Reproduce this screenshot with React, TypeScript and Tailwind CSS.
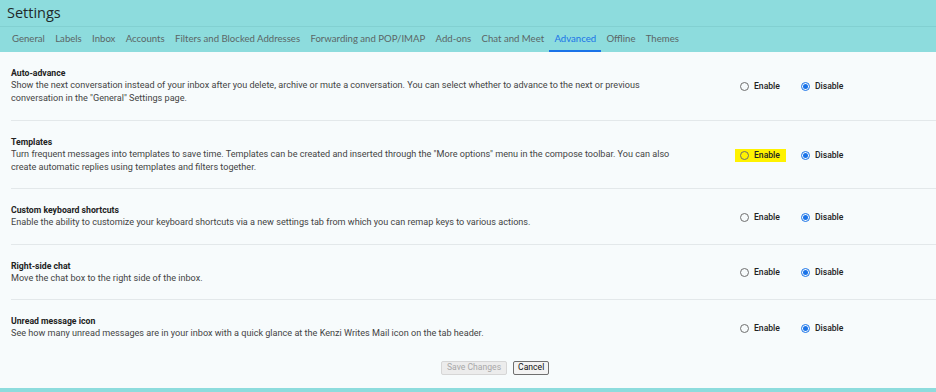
const tabs = [
  'General',
  'Labels',
  'Inbox',
  'Accounts',
  'Filters and Blocked Addresses',
  'Forwarding and POP/IMAP',
  'Add-ons',
  'Chat and Meet',
  'Advanced',
  'Offline',
  'Themes',
];

type Setting = {
  title: string;
  lines: string[];
  highlight?: boolean;
  pb: string;
};

const settings: Setting[] = [
  {
    title: 'Auto-advance',
    lines: [
      'Show the next conversation instead of your inbox after you delete, archive or mute a conversation. You can select whether to advance to the next or previous',
      'conversation in the "General" Settings page.',
    ],
    pb: 'pb-[16px]',
  },
  {
    title: 'Templates',
    lines: [
      'Turn frequent messages into templates to save time. Templates can be created and inserted through the "More options" menu in the compose toolbar. You can also',
      'create automatic replies using templates and filters together.',
    ],
    highlight: true,
    pb: 'pb-[15px]',
  },
  {
    title: 'Custom keyboard shortcuts',
    lines: ['Enable the ability to customize your keyboard shortcuts via a new settings tab from which you can remap keys to various actions.'],
    pb: 'pb-[15px]',
  },
  {
    title: 'Right-side chat',
    lines: ['Move the chat box to the right side of the inbox.'],
    pb: 'pb-[15px]',
  },
  {
    title: 'Unread message icon',
    lines: ['See how many unread messages are in your inbox with a quick glance at the Kenzi Writes Mail icon on the tab header.'],
    pb: 'pb-[21px]',
  },
];

const Radio = ({ checked }: { checked?: boolean }) =>
  checked ? (
    <span className="w-[9px] h-[9px] rounded-full border border-[#1a73e8] flex items-center justify-center">
      <span className="w-[5px] h-[5px] rounded-full bg-[#1a73e8]" />
    </span>
  ) : (
    <span className="w-[9px] h-[9px] rounded-full border border-[#6f6f6f]" />
  );

const SettingRow = ({ s, last }: { s: Setting; last?: boolean }) => (
  <div className={`flex items-center pt-[15px] ${s.pb} ${last ? '' : 'border-b border-[#e3e8ea]'}`}>
    <div className="w-[729px] pr-[30px]">
      <div className="font-bold text-[#222] leading-[12px] text-[8.7px]">{s.title}</div>
      {s.lines.map((l) => (
        <div key={l} className="text-[#444] leading-[12.5px] whitespace-nowrap">
          {l}
        </div>
      ))}
    </div>
    <div className="flex items-center font-medium text-[#222] text-[8.6px] translate-y-[1px]">
      <div className={`flex items-center gap-[5px] h-[13px] ${s.highlight ? 'bg-[#fff200] -ml-[5px] pl-[5px] pr-[6px]' : 'pr-[6px]'}`}>
        <Radio />
        <span>Enable</span>
      </div>
      <div className="flex items-center gap-[5px] ml-[15px]">
        <Radio checked />
        <span>Disable</span>
      </div>
    </div>
  </div>
);

export default function App() {
  return (
    <div className="w-[936px] h-[392px] bg-[#f7fbfc] flex flex-col overflow-hidden font-['Roboto',sans-serif] text-[9.1px]">
      {/* header */}
      <div className="bg-[#8ddcdd]">
        <div className="h-[27px] pl-[7px] flex items-center text-[14.5px] text-[#1f2a2a] font-['Open_Sans',sans-serif] border-b border-[#82d0d1]">
          Settings
        </div>
        <div className="flex pl-[12px] gap-[10.3px] h-[25px] font-['Lato',sans-serif] text-[9.6px]">
          {tabs.map((t) =>
            t === 'Advanced' ? (
              <div key={t} className="flex items-center text-[#1a73e8] border-b-[2px] border-[#1a73e8] px-[5px] -mx-[5px] pt-[2px]">
                {t}
              </div>
            ) : (
              <div key={t} className="flex items-center text-[#5b6666]">
                {t}
              </div>
            ),
          )}
        </div>
      </div>

      {/* settings list */}
      <div className="pl-[11px] flex flex-col">
        {settings.map((s, i) => (
          <SettingRow key={s.title} s={s} last={i === settings.length - 1} />
        ))}
      </div>

      {/* actions */}
      <div className="flex gap-[6px] pl-[441px] text-[8.6px]">
        <button className="h-[14px] px-[5px] border border-[#d6d6d6] bg-[#ececec] text-[#a8a8a8] rounded-[2px] leading-none">
          Save Changes
        </button>
        <button className="h-[14px] px-[4px] border border-[#6f6f6f] bg-[#f3f3f3] text-[#111] rounded-[2px] leading-none">
          Cancel
        </button>
      </div>

      <div className="mt-auto h-[4px] bg-[#8ddcdd]" />
    </div>
  );
}
